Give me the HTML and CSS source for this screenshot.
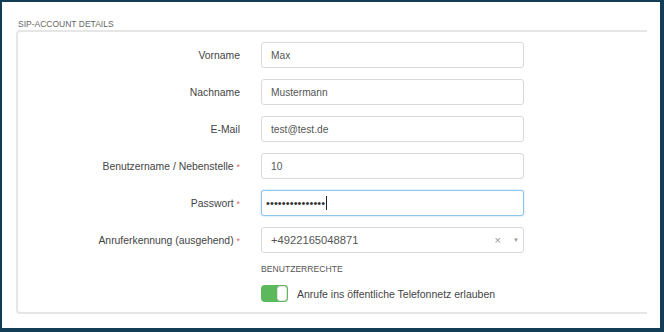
FILE: index.html
```html
<!DOCTYPE html>
<html lang="de">
  <head>
    <meta charset="UTF-8" />
    <meta name="viewport" content="width=device-width, initial-scale=1.0" />
    <title>SIP-Account Details</title>
    <link rel="stylesheet" href="styles.css">
  </head>
  <body>
    <div class="frame">
      <div class="section-title">SIP-Account Details</div>
      <div class="panel">
        <div class="form">
          <label class="label" for="vorname">Vorname</label>
          <input class="field" id="vorname" type="text" value="Max" />

          <label class="label" for="nachname">Nachname</label>
          <input class="field" id="nachname" type="text" value="Mustermann" />

          <label class="label" for="email">E-Mail</label>
          <input class="field" id="email" type="text" value="test@test.de" />

          <label class="label" for="user">Benutzername / Nebenstelle <span class="req">*</span></label>
          <input class="field" id="user" type="text" value="10" />

          <label class="label">Passwort <span class="req">*</span></label>
          <div class="field focus"><span class="dots">•••••••••••••••</span><span class="caret"></span></div>

          <label class="label">Anruferkennung (ausgehend) <span class="req">*</span></label>
          <div class="field select">
            <span class="select-value">+4922165048871</span>
            <span class="select-clear">×</span>
            <span class="select-arrow">▼</span>
          </div>

          <div></div>
          <div class="subtitle">Benutzerrechte</div>

          <div></div>
          <div class="switch-row">
            <span class="switch on"><span class="knob"></span></span>
            <span>Anrufe ins öffentliche Telefonnetz erlauben</span>
          </div>
        </div>
      </div>
    </div>
  </body>
</html>
```

FILE: styles.css
```css
* {
  box-sizing: border-box;
}
body {
  margin: 0;
  background: #fff;
  font-family: "Liberation Sans", Arial, sans-serif;
  color: #444;
}
.frame {
  width: 664px;
  height: 332px;
  border: solid #133d56;
  border-width: 2px 4px 4px 2px;
  padding: 17px 13px 0 14px;
}
.section-title {
  margin-left: 2px;
  font-size: 8.5px;
  line-height: 11px;
  text-transform: uppercase;
  color: #666;
}
.panel {
  border: 2px solid #e6e6e6;
  border-right: none;
  border-radius: 4px 0 0 4px;
  padding: 10px 0 10px 0;
}
.form {
  display: grid;
  grid-template-columns: 222px 263px;
  column-gap: 21px;
  row-gap: 11px;
  align-items: center;
}
.label {
  text-align: right;
  font-size: 10.4px;
  color: #444;
}
.req {
  color: #e06a66;
  font-size: 9px;
}
.field {
  display: flex;
  align-items: center;
  width: 263px;
  height: 26px;
  margin: 0;
  padding: 0 9px;
  border: 1px solid #d9d9d9;
  border-radius: 3px;
  background: #fff;
  font-family: "Liberation Sans", Arial, sans-serif;
  font-size: 10.2px;
  color: #555;
  outline: none;
}
.field.focus {
  border-color: #8ec6ea;
  box-shadow: 0 0 2px rgba(102, 175, 233, 0.6);
  padding-left: 4px;
}
.dots {
  font-size: 11px;
  letter-spacing: 0.1px;
  color: #333;
}
.caret {
  display: inline-block;
  width: 1px;
  height: 14px;
  background: #222;
  margin-left: 1px;
}
.select {
  padding-right: 4px;
}
.select-value {
  flex: 1;
  font-size: 11.2px;
}
.select-clear {
  color: #999;
  font-size: 11px;
  margin-right: 12px;
}
.select-arrow {
  color: #999;
  font-size: 6px;
}
.subtitle {
  font-size: 8.6px;
  text-transform: uppercase;
  color: #555;
}
.switch-row {
  display: flex;
  align-items: center;
  gap: 9px;
  font-size: 10.5px;
  color: #444;
}
.switch {
  display: flex;
  justify-content: flex-end;
  width: 27px;
  height: 17px;
  border-radius: 4px;
  background: #5cb85c;
  padding: 1px;
}
.knob {
  width: 10px;
  height: 15px;
  border-radius: 3px;
  background: #fff;
  border: 1px solid #e3e3e3;
}
```
